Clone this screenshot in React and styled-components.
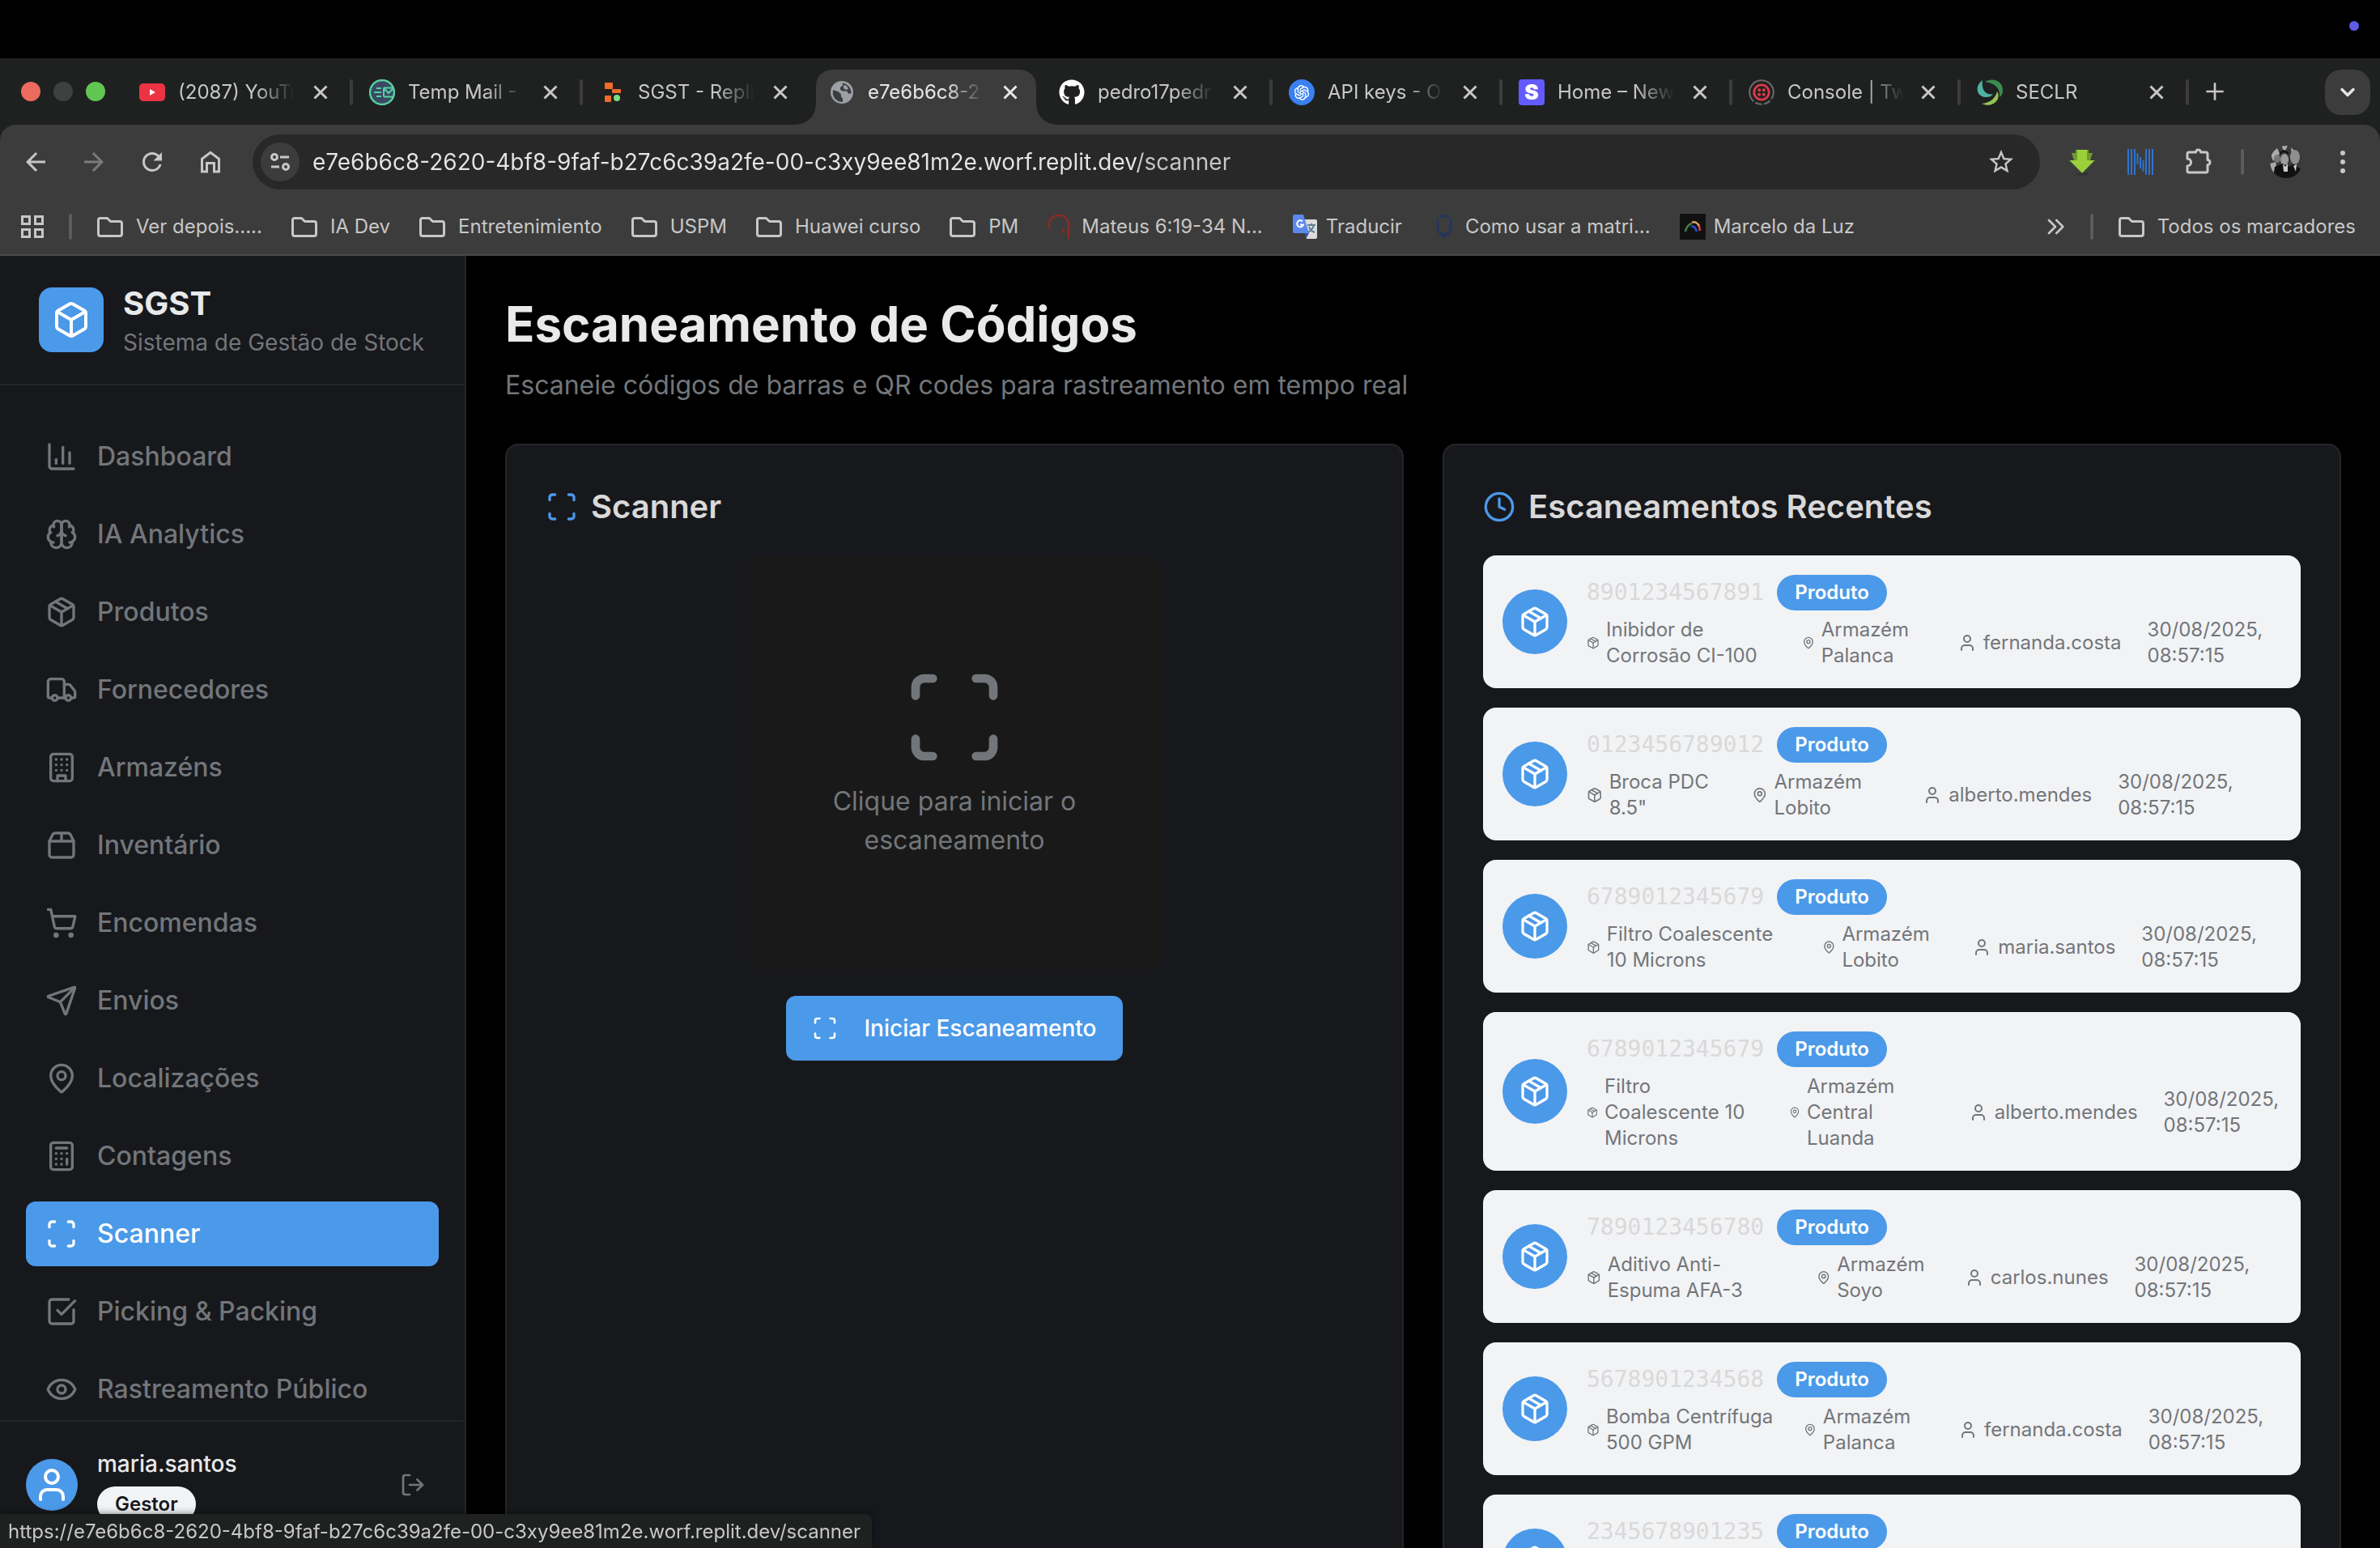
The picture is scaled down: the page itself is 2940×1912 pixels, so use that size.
import React from "react";
import styled, { createGlobalStyle, css } from "styled-components";
import {
  Box,
  Calculator,
  ChartColumn,
  Clock,
  Eye,
  LogOut,
  MapPin,
  Package,
  Scan,
  Send,
  ShoppingCart,
  SquareCheckBig,
  Truck,
  User,
} from "lucide-react";
import { FaGithub } from "react-icons/fa6";
import { AiOutlineOpenAI } from "react-icons/ai";

const color = {
  strip: "#1f2121",
  chrome: "#3c3c3c",
  omnibox: "#282828",
  chromeText: "#c7c7c7",
  chromeBright: "#e6e6e6",
  panel: "#17181c",
  line: "#242628",
  muted: "#72767a",
  blue: "#4b99e9",
  text: "#e7e9ea",
  heading: "#d9d9d9",
  light: "#f2f3f5",
};

const GlobalStyle = createGlobalStyle`
  *, *::before, *::after { box-sizing: border-box; }
  html, body, #root { height: 100%; }
  body { margin: 0; background: #000; font-family: Inter, "Liberation Sans", sans-serif; }
  h1, h2, p, ul { margin: 0; padding: 0; }
  ul { list-style: none; }
  svg { display: block; }
  button { border: 0; padding: 0; background: none; color: inherit; font: inherit; cursor: pointer; }
  a { color: inherit; text-decoration: none; }
`;

/* ---------- window frame ---------- */

const Screen = styled.div`
  height: 100vh;
  display: flex;
  flex-direction: column;
  overflow: hidden;
`;

const MenuBar = styled.div`
  flex: none;
  height: 72px;
  padding: 26px 26px 0 0;
  display: flex;
  justify-content: flex-end;
  background: #000;
`;

const RecordingDot = styled.span`
  width: 12px;
  height: 12px;
  border-radius: 50%;
  background: #5e5ce6;
`;

const Chrome = styled.header`
  flex: none;
  background: ${color.strip};
`;

const TabStrip = styled.div`
  height: 82px;
  padding: 14px 12px 0 26px;
  display: flex;
`;

const Lights = styled.div`
  display: flex;
  gap: 16px;
  align-items: center;
  height: 54px;
  margin-right: 22px;
`;

const Light = styled.button`
  width: 24px;
  height: 24px;
  border-radius: 50%;
  background: ${(p) => p.$tone};
`;

const TabList = styled.div`
  display: flex;
`;

const TabItem = styled.div`
  width: ${(p) => p.$width}px;
  height: 68px;
  padding-bottom: 12px;
  display: flex;
  align-items: center;
`;

const TabBody = styled.div`
  position: relative;
  flex: 1;
  min-width: 0;
  margin: 0 4px;
  padding: 0 20px 0 16px;
  display: flex;
  align-items: center;
  color: ${color.chromeText};
  ${(p) =>
    p.$active &&
    css`
      height: 68px;
      padding-bottom: 12px;
      align-self: flex-start;
      flex-shrink: 0;
      color: ${color.chromeBright};
      background: ${color.chrome};
      border-radius: 20px 20px 0 0;
      &::before,
      &::after {
        content: "";
        position: absolute;
        bottom: 0;
        width: 24px;
        height: 24px;
      }
      &::before {
        right: 100%;
        background: radial-gradient(circle at 0 0, transparent 23px, ${color.chrome} 24px);
      }
      &::after {
        left: 100%;
        background: radial-gradient(circle at 100% 0, transparent 23px, ${color.chrome} 24px);
      }
    `}
`;

const TabDivider = styled.span`
  width: 4px;
  height: 32px;
  border-radius: 2px;
  background: ${(p) => (p.$hidden ? "transparent" : color.chrome)};
`;

const TabTitle = styled.button`
  flex: 1;
  min-width: 0;
  display: flex;
  align-items: center;
  gap: 16px;
  text-align: left;
`;

const TabLabel = styled.span`
  flex: 1;
  min-width: 0;
  overflow: hidden;
  white-space: nowrap;
  font-size: 24px;
  line-height: 32px;
  mask-image: linear-gradient(90deg, #000 96px, transparent 144px);
`;

const FavSlot = styled.span`
  flex: none;
  width: 32px;
  height: 32px;
  display: flex;
  align-items: center;
  justify-content: center;
`;

const OpenAiBadge = styled.span`
  width: 32px;
  height: 32px;
  border-radius: 50%;
  display: grid;
  place-items: center;
  background: #3a80f0;
  color: #fff;
`;

const StripeBadge = styled.span`
  width: 32px;
  height: 32px;
  border-radius: 4px;
  background: #635bff;
  color: #fff;
  font-size: 26px;
  font-weight: 900;
  line-height: 32px;
  text-align: center;
`;

const NewTab = styled.button`
  width: 64px;
  height: 54px;
  display: grid;
  place-items: center;
  color: ${color.chromeText};
`;

const TabSearch = styled.button`
  width: 56px;
  height: 56px;
  margin-left: auto;
  border-radius: 20px;
  display: grid;
  place-items: center;
  background: ${color.chrome};
  color: ${color.chromeBright};
`;

const Bars = styled.div`
  background: ${color.chrome};
  border-radius: 20px 20px 0 0;
  border-bottom: 2px solid #4a4a4a;
  color: ${color.chromeText};
`;

const Toolbar = styled.div`
  height: 92px;
  padding: 0 28px 0 26px;
  display: flex;
  align-items: center;
`;

const NavButtons = styled.div`
  display: flex;
  gap: 36px;
  margin-right: 34px;
`;

const IconButton = styled.button`
  flex: none;
  opacity: ${(p) => (p.$dim ? 0.45 : 1)};
`;

const Omnibox = styled.div`
  flex: 1;
  min-width: 0;
  height: 68px;
  padding: 0 30px 0 10px;
  border-radius: 34px;
  display: flex;
  align-items: center;
  gap: 16px;
  background: ${color.omnibox};
`;

const SiteChip = styled.button`
  flex: none;
  width: 48px;
  height: 48px;
  border-radius: 50%;
  display: grid;
  place-items: center;
  background: ${color.chrome};
`;

const UrlInput = styled.input`
  flex: 1;
  min-width: 0;
  height: 44px;
  padding: 0;
  border: 0;
  outline: 0;
  font-family: inherit;
  font-size: 28px;
  color: transparent;
  caret-color: ${color.chromeBright};
  background: linear-gradient(90deg, ${color.chromeBright} 1020px, ${color.chromeText} 1020px);
  background-clip: text;
  -webkit-background-clip: text;
`;

const ExtensionRow = styled.div`
  display: flex;
  align-items: center;
  gap: 32px;
  margin-left: 32px;
`;

const ExtensionButton = styled.button`
  width: 40px;
  height: 40px;
  display: grid;
  place-items: center;
`;

const BarDivider = styled.span`
  flex: none;
  width: 4px;
  height: 32px;
  border-radius: 2px;
  background: #5c5c5c;
`;

const BookmarkBar = styled.nav`
  height: 68px;
  padding: 0 30px 0 26px;
  display: flex;
  align-items: center;
  gap: 31px;
`;

const BookmarkList = styled.ul`
  flex: 1;
  display: flex;
  gap: 36px;
`;

const Bookmark = styled.a`
  display: flex;
  align-items: center;
  gap: ${(p) => (p.$folder ? 16 : 10)}px;
  font-size: 24px;
  line-height: 32px;
  white-space: nowrap;
`;

/* ---------- application ---------- */

const Workspace = styled.div`
  flex: 1;
  min-height: 0;
  display: flex;
`;

const Sidebar = styled.aside`
  flex: none;
  width: 576px;
  border-right: 2px solid ${color.line};
  display: flex;
  flex-direction: column;
  background: ${color.panel};
`;

const Brand = styled.div`
  flex: none;
  height: 160px;
  padding: 0 48px;
  border-bottom: 2px solid ${color.line};
  display: flex;
  align-items: center;
  gap: 24px;
`;

const BrandMark = styled.span`
  width: 80px;
  height: 80px;
  border-radius: 16px;
  display: grid;
  place-items: center;
  background: ${color.blue};
  color: #fff;
`;

const BrandName = styled.p`
  font-size: 40px;
  line-height: 56px;
  font-weight: 700;
  color: ${color.text};
`;

const BrandNote = styled.p`
  font-size: 28px;
  line-height: 40px;
  color: ${color.muted};
  white-space: nowrap;
`;

const Menu = styled.nav`
  flex: 1;
  min-height: 0;
  overflow: hidden;
  padding: 48px 32px 0;
`;

const MenuList = styled.ul`
  display: flex;
  flex-direction: column;
  gap: 16px;
`;

const MenuLink = styled.a`
  height: 80px;
  padding: 0 24px;
  border-radius: 12px;
  display: flex;
  align-items: center;
  gap: 24px;
  font-size: 32px;
  line-height: 48px;
  font-weight: 500;
  color: ${(p) => (p.$active ? "#fff" : color.muted)};
  background: ${(p) => (p.$active ? color.blue : "transparent")};
`;

const Account = styled.div`
  flex: none;
  padding: 32px;
  border-top: 2px solid ${color.line};
  display: flex;
  align-items: center;
  gap: 24px;
`;

const RoundMark = styled.span`
  flex: none;
  width: ${(p) => p.$size}px;
  height: ${(p) => p.$size}px;
  border-radius: 50%;
  display: grid;
  place-items: center;
  background: ${color.blue};
  color: #fff;
`;

const AccountInfo = styled.div`
  flex: 1;
  display: flex;
  flex-direction: column;
  align-items: flex-start;
  gap: 8px;
`;

const AccountName = styled.p`
  font-size: 28px;
  line-height: 40px;
  font-weight: 500;
  color: ${color.text};
`;

const Pill = styled.span`
  height: 44px;
  padding: 0 22px;
  border-radius: 22px;
  font-size: 24px;
  line-height: 44px;
  font-weight: 600;
  color: ${(p) => (p.$light ? "#17181c" : "#fff")};
  background: ${(p) => (p.$light ? color.light : color.blue)};
`;

const LogoutButton = styled.button`
  padding: 0 16px;
  color: ${color.muted};
`;

const Main = styled.main`
  flex: 1;
  min-width: 0;
  overflow: hidden;
  padding: 48px;
  background: #000;
`;

const PageTitle = styled.h1`
  font-size: 60px;
  line-height: 72px;
  font-weight: 700;
  color: ${color.text};
`;

const PageNote = styled.p`
  margin-top: 16px;
  font-size: 32px;
  line-height: 48px;
  color: ${color.muted};
`;

const Columns = styled.div`
  margin-top: 48px;
  display: grid;
  grid-template-columns: 1fr 1fr;
  gap: 48px;
`;

const Card = styled.section`
  min-width: 0;
  padding: 48px;
  border: 2px solid ${color.line};
  border-radius: 16px;
  background: ${color.panel};
`;

const CardTitle = styled.h2`
  display: flex;
  align-items: center;
  gap: 16px;
  margin-bottom: 32px;
  font-size: 40px;
  line-height: 56px;
  font-weight: 600;
  color: ${color.heading};
  svg {
    color: ${color.blue};
  }
`;

const ScanStage = styled.div`
  display: flex;
  flex-direction: column;
  align-items: center;
  gap: 32px;
`;

const ScanFrame = styled.div`
  width: 512px;
  height: 512px;
  border-radius: 16px;
  display: flex;
  flex-direction: column;
  align-items: center;
  justify-content: center;
  gap: 16px;
  background: #191919;
  color: ${color.muted};
  font-size: 32px;
  line-height: 48px;
  text-align: center;
`;

const ScanButton = styled.button`
  height: 80px;
  padding: 0 32px;
  border-radius: 12px;
  display: flex;
  align-items: center;
  gap: 32px;
  background: ${color.blue};
  color: #fff;
  font-size: 28px;
  font-weight: 500;
`;

const ScanList = styled.ul`
  display: flex;
  flex-direction: column;
  gap: 24px;
`;

const ScanRow = styled.li`
  min-height: 164px;
  padding: 24px;
  border-radius: 16px;
  display: flex;
  align-items: center;
  gap: 24px;
  background: ${color.light};
`;

const ScanInfo = styled.div`
  flex: 1;
  min-width: 0;
  align-self: flex-start;
`;

const ScanHead = styled.div`
  display: flex;
  align-items: center;
  gap: 16px;
`;

const ScanCode = styled.span`
  font-family: "DejaVu Sans Mono", "Liberation Mono", monospace;
  font-size: 28px;
  line-height: 40px;
  color: ${color.heading};
`;

const ScanMeta = styled.div`
  margin-top: 8px;
  display: flex;
  align-items: center;
  gap: 32px;
  font-size: 24px;
  line-height: 32px;
  color: ${color.muted};
`;

const MetaItem = styled.span`
  display: flex;
  align-items: center;
  gap: 8px;
  svg {
    width: 24px;
    height: 24px;
    min-width: 0;
  }
`;

const StatusBubble = styled.div`
  position: fixed;
  left: 0;
  bottom: 0;
  height: 42px;
  padding: 0 14px 0 10px;
  border-radius: 0 8px 0 0;
  background: ${color.strip};
  color: ${color.chromeText};
  box-shadow: 0 0 10px rgba(0, 0, 0, 0.5);
  font-size: 24px;
  line-height: 44px;
  white-space: nowrap;
`;

/* ---------- drawings ---------- */

const Stroke = ({ size = 40, children, width = 2 }) => (
  <svg
    width={size}
    height={size}
    viewBox="0 0 24 24"
    fill="none"
    stroke="currentColor"
    strokeWidth={width}
    strokeLinecap="round"
    strokeLinejoin="round"
    aria-hidden="true"
  >
    {children}
  </svg>
);

const Solid = ({ size = 36, d }) => (
  <svg width={size} height={size} viewBox="0 0 24 24" fill="currentColor" aria-hidden="true">
    <path d={d} />
  </svg>
);

const BrainIcon = () => (
  <Stroke>
    <path d="M12 5a3 3 0 1 0-5.997.125 4 4 0 0 0-2.526 5.77 4 4 0 0 0 .556 6.588A4 4 0 1 0 12 18Z" />
    <path d="M12 5a3 3 0 1 1 5.997.125 4 4 0 0 1 2.526 5.77 4 4 0 0 1-.556 6.588A4 4 0 1 1 12 18Z" />
    <path d="M15 13a4.5 4.5 0 0 1-3-4 4.5 4.5 0 0 1-3 4" />
    <path d="M17.599 6.5a3 3 0 0 0 .399-1.375" />
    <path d="M6.003 5.125A3 3 0 0 0 6.401 6.5" />
    <path d="M3.477 10.896a4 4 0 0 1 .585-.396" />
    <path d="M19.938 10.5a4 4 0 0 1 .585.396" />
    <path d="M6 18a4 4 0 0 1-1.967-.516" />
    <path d="M19.967 17.484A4 4 0 0 1 18 18" />
  </Stroke>
);

const BuildingIcon = () => (
  <Stroke>
    <rect width="16" height="20" x="4" y="2" rx="2" />
    <path d="M9 22v-4h6v4" />
    <path d="M8 6h.01M12 6h.01M16 6h.01M8 10h.01M12 10h.01M16 10h.01M8 14h.01M12 14h.01M16 14h.01" />
  </Stroke>
);

const CrateIcon = () => (
  <Stroke>
    <path d="M3 9h18v10a2 2 0 0 1-2 2H5a2 2 0 0 1-2-2V9Z" />
    <path d="m3 9 2.45-4.9A2 2 0 0 1 7.24 3h9.52a2 2 0 0 1 1.8 1.1L21 9" />
    <path d="M12 3v6" />
  </Stroke>
);

const CrossIcon = () => (
  <svg width="24" height="24" viewBox="0 0 24 24" stroke="currentColor" strokeWidth="3" aria-hidden="true">
    <path d="M4.500 4.500 19.500 19.500M19.500 4.500 4.500 19.500" />
  </svg>
);

const FolderIcon = () => (
  <svg width="32" height="32" viewBox="0 0 32 32" fill="none" stroke="currentColor" strokeWidth="3" strokeLinejoin="round" aria-hidden="true">
    <path d="M3.500 5.500h9l4 4H28a2.500 2.500 0 0 1 2.500 2.500v13a2.500 2.500 0 0 1-2.500 2.500H4a2.500 2.500 0 0 1-2.500-2.500V7.500a2 2 0 0 1 2-2Z" />
  </svg>
);

const YouTubeIcon = () => (
  <svg width="32" height="24" viewBox="0 0 32 24" aria-hidden="true">
    <rect y="1" width="32" height="22" rx="5" fill="#ea3343" />
    <path d="M13 8v8l7-4z" fill="#fff" />
  </svg>
);

const TempMailIcon = () => (
  <svg width="32" height="32" viewBox="0 0 32 32" fill="none" aria-hidden="true">
    <circle cx="16" cy="16" r="15" fill="#3b4a62" stroke="#56cfa6" strokeWidth="2.500" />
    <path d="M18 10.500h13M18 21.500h12M18 10.500v11M18 11l6 6 6-6M9 11h6M6 16h9M9 21h6" stroke="#56cfa6" strokeWidth="2" />
  </svg>
);

const ReplitIcon = () => (
  <svg width="32" height="32" viewBox="0 0 32 32" aria-hidden="true">
    <rect x="7" y="4" width="10" height="8" rx="1" fill="#ec6c2c" />
    <rect x="16" y="12" width="11" height="5" rx="1" fill="#ec6c2c" />
    <rect x="7" y="20" width="8" height="8" rx="1" fill="#ec6c2c" />
    <circle cx="22" cy="23" r="4" fill="#7cdc84" />
  </svg>
);

const GlobeIcon = () => (
  <svg width="28" height="28" viewBox="0 0 28 28" aria-hidden="true">
    <circle cx="14" cy="14" r="14" fill="#9aa0a6" />
    <path d="M3 11l7 2.500 3 3v3l2 2v4.500C8 26 3 21 2.800 15zM15 2.500v3l-3 2.500v3l3 1.500h5l2.500 3.500 3-1c0-6-4-11-10.500-12.500z" fill="#3c3c3c" />
    <path d="M16 5l4 1 2 4-3 1-3-2z" fill="#9aa0a6" />
  </svg>
);

const TwilioIcon = () => (
  <svg width="40" height="40" viewBox="0 0 40 40" fill="none" aria-hidden="true">
    <circle cx="20" cy="20" r="18.500" stroke="#6b6b6b" strokeWidth="2.500" strokeDasharray="11 3 11 3 11 3 74" />
    <circle cx="20" cy="20" r="11.500" stroke="#e0394b" strokeWidth="3.500" />
    <g fill="#e0394b">
      <circle cx="16.500" cy="16.500" r="2.500" />
      <circle cx="23.500" cy="16.500" r="2.500" />
      <circle cx="16.500" cy="23.500" r="2.500" />
      <circle cx="23.500" cy="23.500" r="2.500" />
    </g>
  </svg>
);

const SwirlIcon = () => (
  <svg width="32" height="32" viewBox="0 0 32 32" aria-hidden="true">
    <path d="M7 1C-3 8-1 21 11 22c4 0 7-1 9-4C12 20 5 14 7 1z" fill="#4fb3a3" />
    <path d="M10 3c9-6 22-1 22 10 0 4-1 7-4 9 1-10-4-17-18-19z" fill="#3c8b50" />
    <path d="M6 30c8 4 17 1 20-6 1-4 1-6-1-9-2 8-8 14-19 15z" fill="#93c553" />
  </svg>
);

const DownloadArrow = () => (
  <svg width="32" height="34" viewBox="0 0 32 34" aria-hidden="true">
    <ellipse cx="16" cy="32" rx="8" ry="2" fill="#333" />
    <path d="M8 2h16v4h5l-3 9h6L16 31 0 15h6L3 6h5z" fill="#6f9d2c" />
    <path d="M10 2h12v13h9L16 30.500 1 15h9z" fill="#9bd03c" />
  </svg>
);

const StripedN = () => (
  <svg width="32" height="32" viewBox="0 0 32 32" stroke="#2f72cf" strokeWidth="2" aria-hidden="true">
    <path d="M1 0v32M5 0v32M9 0v32M12.500 5v14M16 10v14M19.500 14v14M23 0v32M27 0v32M31 0v32" />
  </svg>
);

const PuzzleIcon = () => (
  <svg width="36" height="36" viewBox="0 0 36 36" fill="none" stroke="currentColor" strokeWidth="3" strokeLinejoin="round" aria-hidden="true">
    <path d="M6 6h8.500a3 3 0 0 1 6 0H27a2 2 0 0 1 2 2v7.500a3 3 0 0 1 0 6V29a2 2 0 0 1-2 2H6a2 2 0 0 1-2-2v-6a4.500 4.500 0 0 0 0-9V8a2 2 0 0 1 2-2z" />
  </svg>
);

const ProfilePhoto = () => (
  <svg width="40" height="40" viewBox="0 0 40 40" aria-hidden="true">
    <clipPath id="photo">
      <circle cx="20" cy="20" r="20" />
    </clipPath>
    <g clipPath="url(#photo)">
      <rect width="40" height="40" fill="#3a3a3a" />
      <path d="M0 8l8-8 4 10-8 9zM14 0h8l-4 8zM26 2l6 6-5 4zM0 22l7-2 2 10-6 4z" fill="#aaa" />
      <ellipse cx="31" cy="14" rx="6" ry="9" fill="#8f8f8f" />
      <ellipse cx="18" cy="17" rx="5" ry="7" fill="#9c9c9c" />
      <ellipse cx="9" cy="16" rx="4" ry="5" fill="#777" />
      <path d="M12 12c2-5 9-5 11 0v-4l-6-3-5 3zM6 26l10-4 6 4 8-3 8 6v11H4z" fill="#111" />
      <path d="M16 22l3 4 3-4v10h-5zM29 25l4-2-1 9z" fill="#ccc" />
    </g>
  </svg>
);

const MenuDots = () => (
  <svg width="36" height="36" viewBox="0 0 36 36" fill="currentColor" aria-hidden="true">
    <circle cx="18" cy="7" r="3" />
    <circle cx="18" cy="18" r="3" />
    <circle cx="18" cy="29" r="3" />
  </svg>
);

const TuneIcon = () => (
  <svg width="28" height="28" viewBox="0 0 28 28" fill="none" stroke="currentColor" strokeWidth="3" aria-hidden="true">
    <circle cx="7" cy="8" r="3.500" />
    <path d="M14 8h11M3 20h10" />
    <circle cx="21" cy="20" r="3.500" />
  </svg>
);

const GridIcon = () => (
  <svg width="28" height="28" viewBox="0 0 28 28" fill="none" stroke="currentColor" strokeWidth="3" aria-hidden="true">
    <path d="M1.500 1.500h9v9h-9zM17.500 1.500h9v9h-9zM1.500 17.500h9v9h-9zM17.500 17.500h9v9h-9z" />
  </svg>
);

const RedHookIcon = () => (
  <svg width="32" height="32" viewBox="0 0 32 32" fill="none" stroke="#8c2a25" strokeWidth="2.500" aria-hidden="true">
    <path d="M2 18C0 8 6 2 14 2s12 5 12 13v16M19 19l1 5" />
  </svg>
);

const TranslateIcon = () => (
  <svg width="32" height="32" viewBox="0 0 32 32" aria-hidden="true">
    <path d="M13 7h16a2 2 0 0 1 2 2v20a2 2 0 0 1-2 2H18z" fill="#dcdcdc" />
    <path d="M3 1h11l7 23H3a2 2 0 0 1-2-2V3a2 2 0 0 1 2-2z" fill="#5a88ee" />
    <path d="M16 24h5l-3 6z" fill="#3a4fb8" />
    <path d="M13 9.500a4 4 0 1 0 1 4h-4" fill="none" stroke="#fff" strokeWidth="2" />
    <path d="M19 14h10M24 12v2M27 14c-1 4-4 7-7 9M21 16c1 3 4 6 7 7" fill="none" stroke="#5f7f92" strokeWidth="2" />
  </svg>
);

const NavyBadgeIcon = () => (
  <svg width="32" height="32" viewBox="0 0 32 32" fill="none" stroke="#22355f" strokeWidth="2.500" aria-hidden="true">
    <path d="M10 3h12M8 6v15l4 4h8l4-4V6M13 26l3 3 3-3" />
  </svg>
);

const ArchIcon = () => (
  <svg width="32" height="32" viewBox="0 0 32 32" fill="none" strokeWidth="2.500" aria-hidden="true">
    <rect width="32" height="32" fill="#111" />
    <path d="M7 22c1-5 4-9 8-10" stroke="#3f7f4c" />
    <path d="M15 11c4-2 8 1 9 5" stroke="#e8a05c" />
    <path d="M24 15l1 6" stroke="#d8434b" />
    <path d="M14 16c4-1 5 1 7 6" stroke="#2c4fd0" />
  </svg>
);

/* ---------- data ---------- */

const tabs = [
  { label: "(2087) YouTu", icon: <YouTubeIcon /> },
  { label: "Temp Mail - D", icon: <TempMailIcon /> },
  { label: "SGST - Repli", icon: <ReplitIcon />, noDivider: true },
  { label: "e7e6b6c8-2", icon: <GlobeIcon />, active: true, noDivider: true },
  { label: "pedro17pedr", icon: <FaGithub size={32} color="#fff" /> },
  { label: "API keys - O", icon: <OpenAiBadge><AiOutlineOpenAI size={24} /></OpenAiBadge> },
  { label: "Home – New", icon: <StripeBadge>S</StripeBadge> },
  { label: "Console | Tw", icon: <TwilioIcon />, width: 282 },
  { label: "SECLR", icon: <SwirlIcon />, width: 282 },
];

const bookmarks = [
  { label: "Ver depois....." },
  { label: "IA Dev" },
  { label: "Entretenimiento" },
  { label: "USPM" },
  { label: "Huawei curso" },
  { label: "PM" },
  { label: "Mateus 6:19-34 N...", icon: <RedHookIcon /> },
  { label: "Traducir", icon: <TranslateIcon /> },
  { label: "Como usar a matri...", icon: <NavyBadgeIcon /> },
  { label: "Marcelo da Luz", icon: <ArchIcon /> },
];

const menu = [
  { label: "Dashboard", icon: <ChartColumn size={40} /> },
  { label: "IA Analytics", icon: <BrainIcon /> },
  { label: "Produtos", icon: <Package size={40} /> },
  { label: "Fornecedores", icon: <Truck size={40} /> },
  { label: "Armazéns", icon: <BuildingIcon /> },
  { label: "Inventário", icon: <CrateIcon /> },
  { label: "Encomendas", icon: <ShoppingCart size={40} /> },
  { label: "Envios", icon: <Send size={40} /> },
  { label: "Localizações", icon: <MapPin size={40} /> },
  { label: "Contagens", icon: <Calculator size={40} /> },
  { label: "Scanner", icon: <Scan size={40} />, active: true },
  { label: "Picking & Packing", icon: <SquareCheckBig size={40} /> },
  { label: "Rastreamento Público", icon: <Eye size={40} /> },
];

const when = "30/08/2025, 08:57:15";

const scans = [
  { code: "8901234567891", product: "Inibidor de Corrosão CI-100", place: "Armazém Palanca", user: "fernanda.costa" },
  { code: "0123456789012", product: 'Broca PDC 8.5"', place: "Armazém Lobito", user: "alberto.mendes" },
  { code: "6789012345679", product: "Filtro Coalescente 10 Microns", place: "Armazém Lobito", user: "maria.santos" },
  { code: "6789012345679", product: "Filtro Coalescente 10 Microns", place: "Armazém Central Luanda", user: "alberto.mendes" },
  { code: "7890123456780", product: "Aditivo Anti-Espuma AFA-3", place: "Armazém Soyo", user: "carlos.nunes" },
  { code: "5678901234568", product: "Bomba Centrífuga 500 GPM", place: "Armazém Palanca", user: "fernanda.costa" },
  { code: "2345678901235" },
];

const address = "e7e6b6c8-2620-4bf8-9faf-b27c6c39a2fe-00-c3xy9ee81m2e.worf.replit.dev/scanner";

/* ---------- sections ---------- */

const BrowserChrome = () => (
  <Chrome>
    <TabStrip>
      <Lights>
        <Light $tone="#ed6a5e" />
        <Light $tone="#3f4141" />
        <Light $tone="#61c554" />
      </Lights>
      <TabList>
        {tabs.map((tab) => (
          <TabItem key={tab.label} $width={tab.width || 284}>
            <TabBody $active={tab.active}>
              <TabTitle>
                <FavSlot>{tab.icon}</FavSlot>
                <TabLabel>{tab.label}</TabLabel>
              </TabTitle>
              <IconButton>
                <CrossIcon />
              </IconButton>
            </TabBody>
            <TabDivider $hidden={tab.noDivider} />
          </TabItem>
        ))}
      </TabList>
      <NewTab>
        <Solid size={32} d="M11 4h2v7h7v2h-7v7h-2v-7H4v-2h7z" />
      </NewTab>
      <TabSearch>
        <Stroke size={28} width={3}>
          <path d="m6 9 6 6 6-6" />
        </Stroke>
      </TabSearch>
    </TabStrip>
    <Bars>
      <Toolbar>
        <NavButtons>
          <IconButton>
            <Solid d="M20 11H7.830l5.590-5.590L12 4l-8 8 8 8 1.410-1.410L7.830 13H20v-2z" />
          </IconButton>
          <IconButton $dim>
            <Solid d="m12 4-1.410 1.410L16.170 11H4v2h12.170l-5.580 5.590L12 20l8-8z" />
          </IconButton>
          <IconButton>
            <Solid d="M17.650 6.350A7.958 7.958 0 0 0 12 4c-4.420 0-7.990 3.580-7.990 8s3.570 8 7.990 8c3.730 0 6.840-2.550 7.730-6h-2.080A5.990 5.990 0 0 1 12 18c-3.310 0-6-2.690-6-6s2.690-6 6-6c1.660 0 3.140.690 4.220 1.780L13 11h7V4l-2.350 2.350z" />
          </IconButton>
          <IconButton>
            <Solid d="M12 3 4 9v12h6v-7h4v7h6V9l-8-6zm6 16h-2v-7H8v7H6v-9l6-4.500 6 4.500v9z" />
          </IconButton>
        </NavButtons>
        <Omnibox>
          <SiteChip>
            <TuneIcon />
          </SiteChip>
          <UrlInput aria-label="URL" defaultValue={address} />
          <IconButton>
            <Solid d="m22 9.240-7.190-.620L12 2 9.190 8.630 2 9.240l5.460 4.730L5.820 21 12 17.270 18.180 21l-1.630-7.030L22 9.240zM12 15.400l-3.760 2.270 1-4.280-3.320-2.880 4.380-.380L12 6.100l1.710 4.040 4.380.380-3.320 2.880 1 4.280L12 15.400z" />
          </IconButton>
        </Omnibox>
        <ExtensionRow>
          <ExtensionButton>
            <DownloadArrow />
          </ExtensionButton>
          <ExtensionButton>
            <StripedN />
          </ExtensionButton>
          <ExtensionButton>
            <PuzzleIcon />
          </ExtensionButton>
          <BarDivider />
          <ExtensionButton>
            <ProfilePhoto />
          </ExtensionButton>
          <IconButton>
            <MenuDots />
          </IconButton>
        </ExtensionRow>
      </Toolbar>
      <BookmarkBar>
        <IconButton>
          <GridIcon />
        </IconButton>
        <BarDivider />
        <BookmarkList>
          {bookmarks.map((item) => (
            <li key={item.label}>
              <Bookmark href="#" $folder={!item.icon}>
                {item.icon || <FolderIcon />}
                {item.label}
              </Bookmark>
            </li>
          ))}
        </BookmarkList>
        <IconButton>
          <Stroke size={32} width={2}>
            <path d="m9 6 6 6-6 6M16 6l6 6-6 6" />
          </Stroke>
        </IconButton>
        <BarDivider />
        <Bookmark href="#" $folder>
          <FolderIcon />
          Todos os marcadores
        </Bookmark>
      </BookmarkBar>
    </Bars>
  </Chrome>
);

const AppSidebar = () => (
  <Sidebar>
    <Brand>
      <BrandMark>
        <Box size={48} />
      </BrandMark>
      <div>
        <BrandName>SGST</BrandName>
        <BrandNote>Sistema de Gestão de Stock</BrandNote>
      </div>
    </Brand>
    <Menu>
      <MenuList>
        {menu.map((item) => (
          <li key={item.label}>
            <MenuLink href="#" $active={item.active}>
              {item.icon}
              {item.label}
            </MenuLink>
          </li>
        ))}
      </MenuList>
    </Menu>
    <Account>
      <RoundMark $size={64}>
        <User size={48} />
      </RoundMark>
      <AccountInfo>
        <AccountName>maria.santos</AccountName>
        <Pill $light>Gestor</Pill>
      </AccountInfo>
      <LogoutButton>
        <LogOut size={32} />
      </LogoutButton>
    </Account>
  </Sidebar>
);

const RecentScan = ({ scan }) => (
  <ScanRow>
    <RoundMark $size={80}>
      <Package size={40} />
    </RoundMark>
    <ScanInfo>
      <ScanHead>
        <ScanCode>{scan.code}</ScanCode>
        <Pill>Produto</Pill>
      </ScanHead>
      {scan.product && (
        <ScanMeta>
          <MetaItem>
            <Package />
            <span>{scan.product}</span>
          </MetaItem>
          <MetaItem>
            <MapPin />
            <span>{scan.place}</span>
          </MetaItem>
          <MetaItem>
            <User />
            <span>{scan.user}</span>
          </MetaItem>
          <span>{when}</span>
        </ScanMeta>
      )}
    </ScanInfo>
  </ScanRow>
);

export default function App() {
  return (
    <>
      <GlobalStyle />
      <Screen>
        <MenuBar>
          <RecordingDot />
        </MenuBar>
        <BrowserChrome />
        <Workspace>
          <AppSidebar />
          <Main>
            <PageTitle>Escaneamento de Códigos</PageTitle>
            <PageNote>Escaneie códigos de barras e QR codes para rastreamento em tempo real</PageNote>
            <Columns>
              <Card>
                <CardTitle>
                  <Scan size={40} />
                  Scanner
                </CardTitle>
                <ScanStage>
                  <ScanFrame>
                    <Scan size={128} />
                    <p>Clique para iniciar o escaneamento</p>
                  </ScanFrame>
                  <ScanButton>
                    <Scan size={32} />
                    Iniciar Escaneamento
                  </ScanButton>
                </ScanStage>
              </Card>
              <Card>
                <CardTitle>
                  <Clock size={40} />
                  Escaneamentos Recentes
                </CardTitle>
                <ScanList>
                  {scans.map((scan, index) => (
                    <RecentScan key={index} scan={scan} />
                  ))}
                </ScanList>
              </Card>
            </Columns>
          </Main>
        </Workspace>
        <StatusBubble>https://{address}</StatusBubble>
      </Screen>
    </>
  );
}
